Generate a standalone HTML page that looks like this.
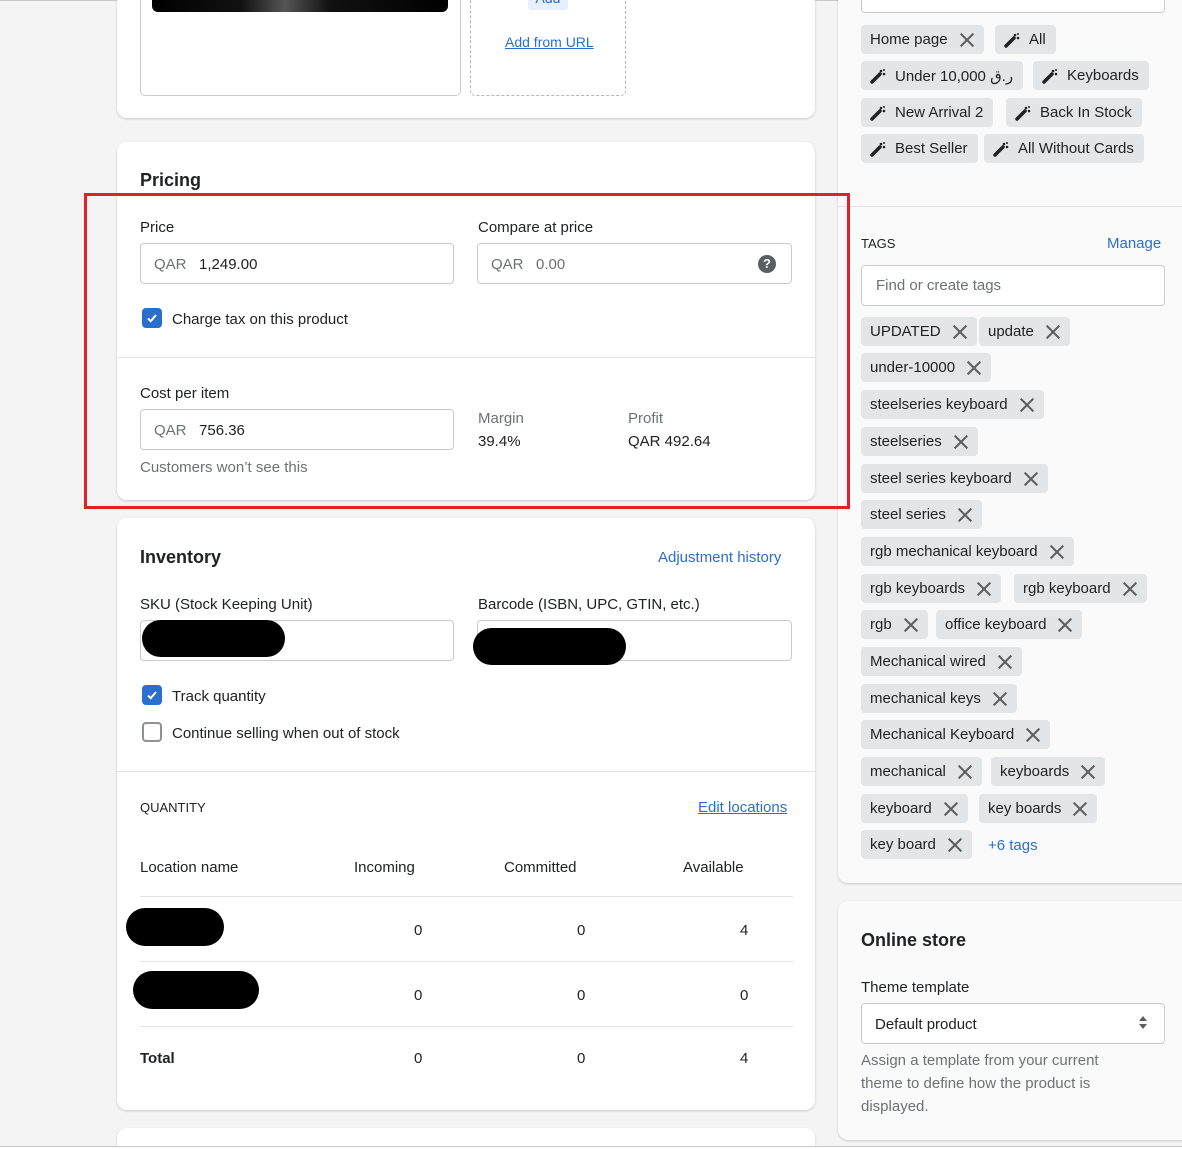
<!DOCTYPE html>
<html style="width:1182px;height:1149px;overflow:hidden"><head><meta charset="utf-8">
<style>
*{box-sizing:border-box;margin:0;padding:0}
html,body{width:1182px;height:1149px;overflow:hidden}
body{background:#f4f4f4;font-family:"Liberation Sans","Noto Sans CJK SC",sans-serif;font-size:15px;color:#202223;position:relative}
.a{position:absolute}
.card{position:absolute;background:#fff;border-radius:10px;box-shadow:0 1px 2px rgba(0,0,0,.18)}
.rcard{position:absolute;background:#fafafa;border-radius:10px;box-shadow:0 1px 2px rgba(0,0,0,.18)}
.inp{position:absolute;border:1px solid #c9cccf;border-radius:4px;background:#fff;height:41px}
.muted{color:#6d7175}
.link{color:#2c6ecb}
.cb{position:absolute;width:20px;height:20px;border-radius:4px;background:#2c6ecb}
.cb svg{position:absolute;left:3px;top:3px}
.blob{position:absolute;background:#000;border-radius:20px}
.tag{position:absolute;height:29px;background:#e4e5e7;border-radius:4px;display:flex;align-items:center;padding:0 10px 0 9px;white-space:nowrap;font-size:15px;color:#202223}
.x{display:inline-block;margin-left:12px;width:14px;height:14px;position:relative}
.x:before,.x:after{content:"";position:absolute;left:6px;top:-2px;width:2px;height:18px;background:#5c5f62;transform:rotate(45deg)}
.x:after{transform:rotate(-45deg)}
.w{display:inline-block;width:16px;height:16px;margin-right:9px}
.hr{position:absolute;height:1px;background:#e1e3e5}
</style></head><body>
<div class="a" style="left:0;top:0;width:1182px;height:1px;background:#c8c8c8"></div>

<div class="card" style="left:117px;top:-20px;width:698px;height:138px"></div>
<div class="a" style="left:140px;top:-10px;width:321px;height:106px;border:1px solid #c9cccf;border-radius:5px;background:#fff"></div>
<div class="a" style="left:152px;top:-10px;width:296px;height:22px;border-radius:0 0 6px 6px;background:linear-gradient(90deg,#000,#111 30%,#555 45%,#111 60%,#000)"></div>
<div class="a" style="left:470px;top:-10px;width:156px;height:106px;border:1px dashed #b5b5b5;border-radius:5px"></div>
<div class="a" style="left:528px;top:-6px;width:40px;height:16px;background:#e6effd;border-radius:3px;font-size:14px;color:#2c6ecb;text-align:center;line-height:8px">Add</div>
<div class="a link" style="left:505px;top:34px;font-size:14px;text-decoration:underline">Add from URL</div>

<div class="card" style="left:117px;top:142px;width:698px;height:358px"></div>
<div class="a" style="left:140px;top:170px;font-size:18px;font-weight:bold;color:#202223">Pricing</div>
<div class="a" style="left:140px;top:219px">Price</div>
<div class="inp" style="left:140px;top:243px;width:314px"></div>
<div class="a" style="left:154px;top:256px"><span class="muted">QAR</span>&nbsp;&nbsp;&nbsp;1,249.00</div>
<div class="a" style="left:478px;top:219px">Compare at price</div>
<div class="inp" style="left:477px;top:243px;width:315px"></div>
<div class="a muted" style="left:491px;top:256px">QAR&nbsp;&nbsp;&nbsp;0.00</div>
<div class="a" style="left:758px;top:255px;width:18px;height:18px;border-radius:50%;background:#5c5f62;color:#fff;font-size:13px;font-weight:bold;text-align:center;line-height:18px">?</div>
<div class="cb" style="left:142px;top:308px"><svg width="14" height="14" viewBox="0 0 14 14"><path d="M3 7.5l2.7 2.7L11 4" stroke="#fff" stroke-width="2" fill="none"/></svg></div>
<div class="a" style="left:172px;top:311px">Charge tax on this product</div>
<div class="hr" style="left:117px;top:357px;width:698px"></div>
<div class="a" style="left:140px;top:385px">Cost per item</div>
<div class="inp" style="left:140px;top:409px;width:314px"></div>
<div class="a" style="left:154px;top:422px"><span class="muted">QAR</span>&nbsp;&nbsp;&nbsp;756.36</div>
<div class="a muted" style="left:140px;top:459px">Customers won’t see this</div>
<div class="a muted" style="left:478px;top:410px">Margin</div>
<div class="a" style="left:478px;top:433px">39.4%</div>
<div class="a muted" style="left:628px;top:410px">Profit</div>
<div class="a" style="left:628px;top:433px">QAR 492.64</div>

<div class="card" style="left:117px;top:518px;width:698px;height:592px"></div>
<div class="a" style="left:140px;top:547px;font-size:18px;font-weight:bold">Inventory</div>
<div class="a link" style="left:658px;top:549px">Adjustment history</div>
<div class="a" style="left:140px;top:596px">SKU (Stock Keeping Unit)</div>
<div class="inp" style="left:140px;top:620px;width:314px"></div>
<div class="blob" style="left:142px;top:620px;width:143px;height:37px"></div>
<div class="a" style="left:478px;top:596px">Barcode (ISBN, UPC, GTIN, etc.)</div>
<div class="inp" style="left:477px;top:620px;width:315px"></div>
<div class="blob" style="left:473px;top:628px;width:153px;height:37px"></div>
<div class="cb" style="left:142px;top:685px"><svg width="14" height="14" viewBox="0 0 14 14"><path d="M3 7.5l2.7 2.7L11 4" stroke="#fff" stroke-width="2" fill="none"/></svg></div>
<div class="a" style="left:172px;top:688px">Track quantity</div>
<div class="a" style="left:142px;top:722px;width:20px;height:20px;border:2px solid #8c9196;border-radius:4px"></div>
<div class="a" style="left:172px;top:725px">Continue selling when out of stock</div>
<div class="hr" style="left:117px;top:771px;width:698px"></div>
<div class="a" style="left:140px;top:800px;font-size:13px">QUANTITY</div>
<div class="a link" style="left:698px;top:799px;text-decoration:underline">Edit locations</div>
<div class="a" style="left:140px;top:859px">Location name</div>
<div class="a" style="left:354px;top:859px">Incoming</div>
<div class="a" style="left:504px;top:859px">Committed</div>
<div class="a" style="left:683px;top:859px">Available</div>
<div class="hr" style="left:140px;top:896px;width:653px"></div>
<div class="blob" style="left:126px;top:908px;width:98px;height:38px"></div>
<div class="a" style="left:414px;top:922px">0</div><div class="a" style="left:577px;top:922px">0</div><div class="a" style="left:740px;top:922px">4</div>
<div class="hr" style="left:140px;top:961px;width:653px"></div>
<div class="blob" style="left:133px;top:971px;width:126px;height:38px"></div>
<div class="a" style="left:414px;top:987px">0</div><div class="a" style="left:577px;top:987px">0</div><div class="a" style="left:740px;top:987px">0</div>
<div class="hr" style="left:140px;top:1026px;width:653px"></div>
<div class="a" style="left:140px;top:1050px;font-weight:bold">Total</div>
<div class="a" style="left:414px;top:1050px">0</div><div class="a" style="left:577px;top:1050px">0</div><div class="a" style="left:740px;top:1050px">4</div>

<div class="card" style="left:117px;top:1128px;width:698px;height:18px;border-radius:10px 10px 0 0"></div>

<div class="rcard" style="left:838px;top:-20px;width:360px;height:903px"></div>
<div class="a" style="left:861px;top:-10px;width:304px;height:23px;border:1px solid #c9cccf;border-radius:4px;background:#fff"></div>

<div class="tag" style="left:861px;top:25px">Home page<span class="x"></span></div>
<div class="tag" style="left:995px;top:25px"><svg class="w" viewBox="0 0 16 16"><path d="M2 14L10 6" stroke="#202223" stroke-width="3.5" stroke-linecap="round"/><circle cx="11" cy="3" r="1.3" fill="#202223"/><circle cx="14" cy="6" r="1.3" fill="#202223"/><circle cx="14" cy="2" r="1" fill="#202223"/></svg>All</div>
<div class="tag" style="left:861px;top:61px"><svg class="w" viewBox="0 0 16 16"><path d="M2 14L10 6" stroke="#202223" stroke-width="3.5" stroke-linecap="round"/><circle cx="11" cy="3" r="1.3" fill="#202223"/><circle cx="14" cy="6" r="1.3" fill="#202223"/><circle cx="14" cy="2" r="1" fill="#202223"/></svg>Under 10,000 ر.ق</div>
<div class="tag" style="left:1033px;top:61px"><svg class="w" viewBox="0 0 16 16"><path d="M2 14L10 6" stroke="#202223" stroke-width="3.5" stroke-linecap="round"/><circle cx="11" cy="3" r="1.3" fill="#202223"/><circle cx="14" cy="6" r="1.3" fill="#202223"/><circle cx="14" cy="2" r="1" fill="#202223"/></svg>Keyboards</div>
<div class="tag" style="left:861px;top:98px"><svg class="w" viewBox="0 0 16 16"><path d="M2 14L10 6" stroke="#202223" stroke-width="3.5" stroke-linecap="round"/><circle cx="11" cy="3" r="1.3" fill="#202223"/><circle cx="14" cy="6" r="1.3" fill="#202223"/><circle cx="14" cy="2" r="1" fill="#202223"/></svg>New Arrival 2</div>
<div class="tag" style="left:1006px;top:98px"><svg class="w" viewBox="0 0 16 16"><path d="M2 14L10 6" stroke="#202223" stroke-width="3.5" stroke-linecap="round"/><circle cx="11" cy="3" r="1.3" fill="#202223"/><circle cx="14" cy="6" r="1.3" fill="#202223"/><circle cx="14" cy="2" r="1" fill="#202223"/></svg>Back In Stock</div>
<div class="tag" style="left:861px;top:134px"><svg class="w" viewBox="0 0 16 16"><path d="M2 14L10 6" stroke="#202223" stroke-width="3.5" stroke-linecap="round"/><circle cx="11" cy="3" r="1.3" fill="#202223"/><circle cx="14" cy="6" r="1.3" fill="#202223"/><circle cx="14" cy="2" r="1" fill="#202223"/></svg>Best Seller</div>
<div class="tag" style="left:984px;top:134px"><svg class="w" viewBox="0 0 16 16"><path d="M2 14L10 6" stroke="#202223" stroke-width="3.5" stroke-linecap="round"/><circle cx="11" cy="3" r="1.3" fill="#202223"/><circle cx="14" cy="6" r="1.3" fill="#202223"/><circle cx="14" cy="2" r="1" fill="#202223"/></svg>All Without Cards</div>

<div class="hr" style="left:838px;top:206px;width:344px"></div>
<div class="a" style="left:861px;top:236px;font-size:13px">TAGS</div>
<div class="a link" style="left:1107px;top:235px">Manage</div>
<div class="inp" style="left:861px;top:265px;width:304px"></div>
<div class="a muted" style="left:876px;top:277px">Find or create tags</div>

<div class="tag" style="left:861px;top:317px">UPDATED<span class="x"></span></div>
<div class="tag" style="left:979px;top:317px">update<span class="x"></span></div>
<div class="tag" style="left:861px;top:353px">under-10000<span class="x"></span></div>
<div class="tag" style="left:861px;top:390px">steelseries keyboard<span class="x"></span></div>
<div class="tag" style="left:861px;top:427px">steelseries<span class="x"></span></div>
<div class="tag" style="left:861px;top:464px">steel series keyboard<span class="x"></span></div>
<div class="tag" style="left:861px;top:500px">steel series<span class="x"></span></div>
<div class="tag" style="left:861px;top:537px">rgb mechanical keyboard<span class="x"></span></div>
<div class="tag" style="left:861px;top:574px">rgb keyboards<span class="x"></span></div>
<div class="tag" style="left:1014px;top:574px">rgb keyboard<span class="x"></span></div>
<div class="tag" style="left:861px;top:610px">rgb<span class="x"></span></div>
<div class="tag" style="left:936px;top:610px">office keyboard<span class="x"></span></div>
<div class="tag" style="left:861px;top:647px">Mechanical wired<span class="x"></span></div>
<div class="tag" style="left:861px;top:684px">mechanical keys<span class="x"></span></div>
<div class="tag" style="left:861px;top:720px">Mechanical Keyboard<span class="x"></span></div>
<div class="tag" style="left:861px;top:757px">mechanical<span class="x"></span></div>
<div class="tag" style="left:991px;top:757px">keyboards<span class="x"></span></div>
<div class="tag" style="left:861px;top:794px">keyboard<span class="x"></span></div>
<div class="tag" style="left:979px;top:794px">key boards<span class="x"></span></div>
<div class="tag" style="left:861px;top:830px">key board<span class="x"></span></div>
<div class="a link" style="left:988px;top:837px">+6 tags</div>

<div class="rcard" style="left:838px;top:901px;width:360px;height:239px"></div>
<div class="a" style="left:861px;top:930px;font-size:18px;font-weight:bold">Online store</div>
<div class="a" style="left:861px;top:979px">Theme template</div>
<div class="inp" style="left:861px;top:1003px;width:304px"></div>
<div class="a" style="left:875px;top:1016px">Default product</div>
<div class="a" style="left:1139px;top:1016px;width:0;height:0;border-left:4px solid transparent;border-right:4px solid transparent;border-bottom:5px solid #5c5f62"></div>
<div class="a" style="left:1139px;top:1024px;width:0;height:0;border-left:4px solid transparent;border-right:4px solid transparent;border-top:5px solid #5c5f62"></div>
<div class="a muted" style="left:861px;top:1049px;width:280px;line-height:23px">Assign a template from your current theme to define how the product is displayed.</div>

<div class="a" style="left:0;top:1146px;width:1182px;height:3px;background:#fff;border-top:1px solid #c8c8c8"></div>

<div class="a" style="left:84px;top:193px;width:766px;height:316px;border:3px solid #e0212b"></div>
</body></html>
